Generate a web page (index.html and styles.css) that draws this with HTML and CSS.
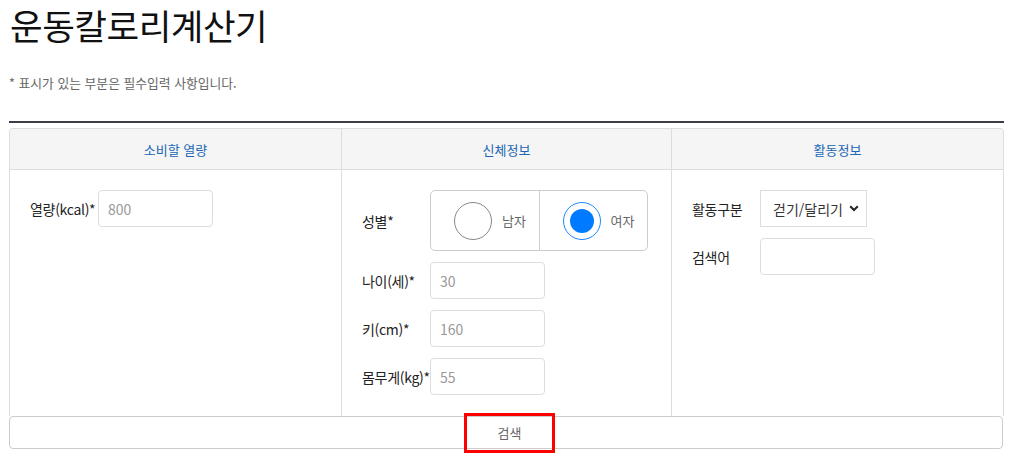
FILE: index.html
```html
<!DOCTYPE html>
<html lang="ko">
<head>
<meta charset="utf-8">
<title>운동칼로리계산기</title>
<link rel="stylesheet" href="styles.css">
</head>
<body>
<div class="page">
  <h1 class="title">운동칼로리계산기</h1>
  <p class="notice">* 표시가 있는 부분은 필수입력 사항입니다.</p>
  <div class="rule"></div>
  <div class="board">
    <div class="col">
      <div class="col-head">소비할 열량</div>
      <div class="col-body">
        <div class="row">
          <label class="lbl">열량(kcal)*</label>
          <input class="field" type="text" placeholder="800">
        </div>
      </div>
    </div>
    <div class="col">
      <div class="col-head">신체정보</div>
      <div class="col-body">
        <div class="row">
          <span class="lbl">성별*</span>
          <div class="gender">
            <label class="opt"><span class="radio"></span><span class="opt-text">남자</span></label>
            <label class="opt"><span class="radio on"><span class="dot"></span></span><span class="opt-text">여자</span></label>
          </div>
        </div>
        <div class="row">
          <label class="lbl">나이(세)*</label>
          <input class="field" type="text" placeholder="30">
        </div>
        <div class="row">
          <label class="lbl">키(cm)*</label>
          <input class="field" type="text" placeholder="160">
        </div>
        <div class="row">
          <label class="lbl">몸무게(kg)*</label>
          <input class="field" type="text" placeholder="55">
        </div>
      </div>
    </div>
    <div class="col">
      <div class="col-head">활동정보</div>
      <div class="col-body">
        <div class="row">
          <label class="lbl">활동구분</label>
          <div class="select-wrap">
            <select class="select">
              <option>걷기/달리기</option>
            </select>
            <svg class="chev" width="10" height="7" viewBox="0 0 10 7"><path d="M1.2 1.2 L5 5 L8.8 1.2" fill="none" stroke="#222" stroke-width="2"/></svg>
          </div>
        </div>
        <div class="row">
          <label class="lbl">검색어</label>
          <input class="field" type="text">
        </div>
      </div>
    </div>
  </div>
  <div class="search" role="button"><span class="search-mark">검색</span></div>
</div>
</body>
</html>
```
FILE: styles.css
```css
* { box-sizing: border-box; }
html, body { margin: 0; padding: 0; background: #fff; }
body {
  font-family: "Noto Sans CJK KR", "Noto Sans", sans-serif;
  color: #222;
}
.page {
  padding: 0 5px 8px 9px;
}
.title {
  margin: 0;
  padding-left: 1px;
  font-size: 35.5px;
  line-height: 50px;
  font-weight: 400;
  color: #111;
  letter-spacing: -0.5px;
}
.notice {
  margin: 24px 0 0 0;
  font-size: 12.8px;
  line-height: 18px;
  color: #666;
}
.rule {
  margin-top: 29px;
  height: 2px;
  background: #3c3c48;
}
.board {
  margin-top: 5px;
  display: grid;
  grid-template-columns: 331px 330px 1fr;
  border: 1px solid #ddd;
  border-bottom: none;
  border-radius: 4px 4px 0 0;
  overflow: hidden;
}
.col + .col { border-left: 1px solid #ddd; }
.col-head {
  height: 41px;
  background: #f5f5f5;
  border-bottom: 1px solid #ddd;
  display: flex;
  align-items: center;
  justify-content: center;
  font-size: 13px;
  color: #2066b4;
}
.col-body {
  padding: 20px 20px 21px 20px;
  display: flex;
  flex-direction: column;
  gap: 11px;
}
.row {
  display: flex;
  align-items: center;
}
.lbl {
  width: 68px;
  flex: none;
  font-size: 14px;
  color: #222;
  white-space: nowrap;
  letter-spacing: -0.3px;
}
.field {
  width: 115px;
  height: 37px;
  border: 1px solid #ddd;
  border-radius: 4px;
  padding: 0 9px;
  font-family: inherit;
  font-size: 14px;
  color: #333;
  outline: none;
}
.field::placeholder { color: #999; }
.gender {
  width: 218px;
  height: 61px;
  border: 1px solid #ccc;
  border-radius: 5px;
  display: flex;
}
.opt {
  flex: 1;
  display: flex;
  align-items: center;
  padding-left: 23px;
  gap: 10px;
}
.opt + .opt { border-left: 1px solid #ccc; }
.radio {
  width: 38px;
  height: 38px;
  border-radius: 50%;
  border: 1px solid #888;
  display: flex;
  align-items: center;
  justify-content: center;
  flex: none;
}
.radio.on { border-color: #1e86ff; }
.dot {
  width: 24px;
  height: 24px;
  border-radius: 50%;
  background: #007bff;
}
.opt-text {
  font-size: 13px;
  color: #666;
}
.select-wrap {
  position: relative;
  width: 107px;
  height: 37px;
}
.select {
  appearance: none;
  -webkit-appearance: none;
  width: 100%;
  height: 100%;
  border: 1px solid #ddd;
  border-radius: 0;
  background: #fff;
  padding: 0 0 0 12px;
  font-family: inherit;
  font-size: 14px;
  color: #333;
  outline: none;
}
.chev {
  position: absolute;
  right: 8px;
  top: 15px;
  pointer-events: none;
}
.search {
  display: flex;
  align-items: center;
  justify-content: center;
  width: calc(100% - 1px);
  height: 33px;
  border: 1px solid #ccc;
  border-radius: 4px;
  background: #fff;
  font-size: 13px;
  color: #666;
  overflow: visible;
}
.search-mark {
  display: flex;
  align-items: center;
  justify-content: center;
  width: 91px;
  height: 40px;
  margin-left: 7px;
  border: 3px solid #ff0000;
  flex: none;
}
```
